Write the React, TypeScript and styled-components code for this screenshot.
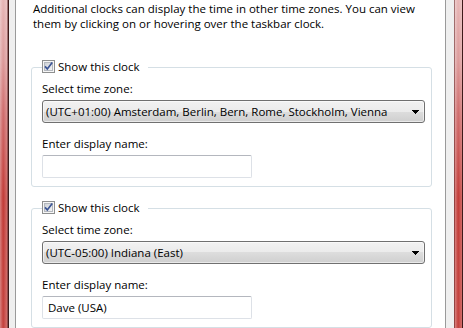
import React from "react";
import styled, { createGlobalStyle } from "styled-components";

const GlobalStyle = createGlobalStyle`
  html, body { margin: 0; padding: 0; overflow: hidden; }
  body {
    font-family: "Open Sans", "Noto Sans", sans-serif;
    font-size: 11.5px;
    color: #000;
  }
`;

const Window = styled.div`
  display: flex;
  width: 463px;
  height: 328px;
`;

const GlassFrame = styled.div<{ $side: "left" | "right" }>`
  width: 7px;
  flex: none;
  background:
    linear-gradient(to right, rgba(255, 255, 255, 0.35), rgba(255, 255, 255, 0) 45%, rgba(255, 255, 255, 0.25)),
    linear-gradient(to bottom, #e6b4b4 0%, #dc9a9a 18%, #cf6a6a 35%, #c23a36 60%, #c4403c 100%);
  border-${(p) => (p.$side === "left" ? "right" : "left")}: 1px solid rgba(90, 30, 30, 0.5);
`;

const FrameEdge = styled.div`
  width: 1px;
  flex: none;
  background: #3e1a1a;
`;

const FrameStrip = styled.div<{ $w: number }>`
  width: ${(p) => p.$w}px;
  flex: none;
  background: #efefef;
`;

const Client = styled.div`
  flex: 1;
  min-width: 0;
  background: #fff;
  border-left: 1px solid #9a9a9a;
  border-right: 1px solid #9a9a9a;
`;

const Intro = styled.p`
  margin: 1px 0 0 17px;
  width: 400px;
  line-height: 15px;
`;

const Group = styled.fieldset<{ $first?: boolean }>`
  margin: ${(p) => (p.$first ? "28px" : "13px")} 13px 0 15px;
  padding: 5px 8px 8px 10px;
  border: 1px solid #d5dfe5;
  border-radius: 3px;
  min-width: 0;
`;

const Legend = styled.legend`
  display: flex;
  align-items: center;
  gap: 3px;
  padding: 0 8px 2px 0;
  line-height: 15px;
`;

const Label = styled.label`
  display: block;
  line-height: 15px;
  margin-bottom: 4px;
`;

const Combo = styled.div`
  box-sizing: border-box;
  display: flex;
  align-items: center;
  justify-content: space-between;
  width: 383px;
  height: 23px;
  padding: 0 5px 0 3px;
  margin-bottom: 13px;
  border: 1px solid #707070;
  border-radius: 3px;
  line-height: 21px;
  white-space: nowrap;
  background: linear-gradient(to bottom, #f2f2f2 0%, #ebebeb 50%, #dddddd 50%, #cfcfcf 100%);
  box-shadow: inset 0 0 0 1px rgba(255, 255, 255, 0.55);
`;

const TextBox = styled.div`
  box-sizing: border-box;
  width: 210px;
  height: 23px;
  padding: 0 5px;
  line-height: 21px;
  border: 1px solid #dde1e7;
  border-top-color: #b4b7be;
  border-radius: 2px;
  background: #fff;
`;

const CheckBox = () => (
  <svg width="13" height="13" viewBox="0 0 13 13" aria-hidden="true">
    <defs>
      <linearGradient id="cbfill" x1="0" y1="0" x2="1" y2="1">
        <stop offset="0" stopColor="#cbcfd5" />
        <stop offset="1" stopColor="#f6f6f6" />
      </linearGradient>
    </defs>
    <rect x="0.5" y="0.5" width="12" height="12" fill="#f6f6f6" stroke="#8e8f8f" />
    <rect x="2.5" y="2.5" width="8" height="8" fill="url(#cbfill)" stroke="#b4b8be" />
    <path d="M3 6.4 L5.3 8.9 L10.2 2.6" fill="none" stroke="#3c5595" strokeWidth="1.7" />
  </svg>
);

const Arrow = () => (
  <svg width="7" height="4" viewBox="0 0 7 4" aria-hidden="true">
    <rect x="0" y="0" width="7" height="1" fill="#000" />
    <rect x="1" y="1" width="5" height="1" fill="#000" />
    <rect x="2" y="2" width="3" height="1" fill="#000" />
    <rect x="3" y="3" width="1" height="1" fill="#000" />
  </svg>
);

function ClockGroup({ zone, name, first }: { zone: string; name: string; first?: boolean }) {
  return (
    <Group $first={first}>
      <Legend>
        <CheckBox />
        Show this clock
      </Legend>
      <Label>Select time zone:</Label>
      <Combo>
        <span>{zone}</span>
        <Arrow />
      </Combo>
      <Label>Enter display name:</Label>
      <TextBox>{name}</TextBox>
    </Group>
  );
}

export default function App() {
  return (
    <Window>
      <GlobalStyle />
      <GlassFrame $side="left" />
      <FrameEdge />
      <FrameStrip $w={6} />
      <Client>
        <Intro>
          Additional clocks can display the time in other time zones. You can view them by clicking on or hovering
          over the taskbar clock.
        </Intro>
        <ClockGroup first zone="(UTC+01:00) Amsterdam, Berlin, Bern, Rome, Stockholm, Vienna" name="" />
        <ClockGroup zone="(UTC-05:00) Indiana (East)" name="Dave (USA)" />
      </Client>
      <FrameStrip $w={8} />
      <GlassFrame $side="right" />
      <FrameEdge />
    </Window>
  );
}
